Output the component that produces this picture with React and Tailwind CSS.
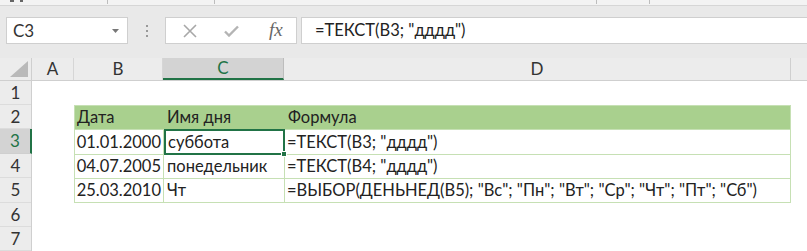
import React from 'react';

const font = { fontFamily: 'Lato, "Open Sans", sans-serif' };

const rowHeights = [24, 24, 25, 24, 25, 24, 24];

export default function App() {
  return (
    <div className="w-[807px] h-[251px] overflow-hidden bg-white text-[#222]" style={font}>
      {/* обрезанная лента сверху */}
      <div className="h-[6px] bg-[#f3f3f3] border-b border-[#d6d6d6] flex items-start">
        <span className="ml-[10px] w-[98px] border-r border-[#bdbdbd] h-[4px] flex gap-[6px]">
          <span className="w-[4px] h-[2px] bg-[#666]"></span>
          <span className="w-[3px] h-[2px] bg-[#666]"></span>
        </span>
        <span className="w-[107px] border-r border-[#bdbdbd] h-[4px]"></span>
        <span className="w-[382px] border-r border-[#bdbdbd] h-[4px]"></span>
        <span className="w-[53px] border-r border-[#bdbdbd] h-[4px]"></span>
      </div>

      {/* строка формул */}
      <div className="h-[52px] bg-[#e9e9e9] flex items-center pl-[6px] pb-[3px]">
        <div className="w-[122px] shrink-0 h-[27px] bg-white border border-[#cfcfcf] flex items-center justify-between pl-[6px] pr-[8px]">
          <span className="text-[17px] text-[#333]">C3</span>
          <svg width="7" height="4" viewBox="0 0 7 4"><path d="M0 0h7L3.5 4z" fill="#777" /></svg>
        </div>
        <div className="w-[37px] shrink-0 flex flex-col items-center gap-[3px]">
          <span className="w-[2px] h-[2px] bg-[#999]"></span>
          <span className="w-[2px] h-[2px] bg-[#999]"></span>
          <span className="w-[2px] h-[2px] bg-[#999]"></span>
        </div>
        <div className="w-[132px] shrink-0 h-[27px] bg-white border border-[#cfcfcf] flex items-center">
          <svg className="ml-[17px]" width="14" height="14" viewBox="0 0 14 14">
            <path d="M1 1L13 13M13 1L1 13" stroke="#a8a8a8" strokeWidth="1.6" />
          </svg>
          <svg className="ml-[27px]" width="15" height="12" viewBox="0 0 15 12">
            <path d="M1 6.5L5 10.5L14 1.5" stroke="#b4b4b4" strokeWidth="2.4" fill="none" />
          </svg>
          <span className="ml-[30px] text-[19px] italic text-[#666]" style={{ fontFamily: '"Liberation Serif", serif' }}>fx</span>
        </div>
        <div className="ml-[4px] flex-1 h-[27px] bg-white border border-[#cfcfcf] border-r-0 flex items-center pl-[13px]">
          <span className="text-[16.5px] text-[#222]">=ТЕКСТ(B3; "дддд")</span>
        </div>
      </div>

      {/* заголовки столбцов */}
      <div className="h-[23px] flex bg-[#ececec] border-b border-[#cfcfcf] text-[17px] text-[#333]">
        <div className="w-[32px] shrink-0 border-r border-[#cfcfcf] flex items-end justify-end p-[3px]">
          <svg width="18" height="16" viewBox="0 0 18 16"><path d="M18 0V16H0z" fill="#b9b9b9" /></svg>
        </div>
        <div className="w-[42px] shrink-0 border-r border-[#d6d6d6] flex items-center justify-center">A</div>
        <div className="w-[89px] shrink-0 border-r border-[#d6d6d6] flex items-center justify-center">B</div>
        <div className="w-[121px] shrink-0 bg-[#d3d3d3] border-r border-[#bdbdbd] border-b-2 border-b-[#217346] text-[#217346] flex items-center justify-center">C</div>
        <div className="w-[507px] shrink-0 border-r border-[#cfcfcf] flex items-center justify-center">D</div>
        <div className="flex-1"></div>
      </div>

      {/* строки */}
      <div className="flex">
        <div className="w-[32px] shrink-0 bg-[#ececec] border-r border-[#cfcfcf] flex flex-col text-[17px] text-[#333]">
          {rowHeights.map((h, i) => (
            <div
              key={i}
              style={{ height: h }}
              className={
                i === 2
                  ? 'bg-[#d3d3d3] text-[#217346] border-b border-[#cfcfcf] border-r-2 border-r-[#217346] -mr-px flex items-center justify-center'
                  : 'border-b border-[#dcdcdc] flex items-center justify-center'
              }
            >
              {i + 1}
            </div>
          ))}
        </div>

        <div className="flex-1 flex flex-col text-[16.5px]">
          <div className="h-[24px]"></div>
          <div className="ml-[42px] w-[717px] border border-[#c6e0b4]">
            <div className="h-[23px] bg-[#a9d08e] flex items-center">
              <div className="w-[89px] shrink-0 pl-[2px]">Дата</div>
              <div className="w-[121px] shrink-0 pl-[3px]">Имя дня</div>
              <div className="flex-1 pl-[3px]">Формула</div>
            </div>
            <div className="h-[25px] flex border-t border-[#c6e0b4]">
              <div className="w-[89px] shrink-0 border-r border-[#c6e0b4] flex items-center justify-end pr-[2px]">01.01.2000</div>
              <div className="relative w-[121px] shrink-0 border-2 border-[#217346] -my-px flex items-center pl-[2px]">
                суббота
                <span className="absolute -right-[4px] -bottom-[4px] w-[6px] h-[6px] bg-[#217346] border border-white"></span>
              </div>
              <div className="flex-1 flex items-center pl-[2px]">=ТЕКСТ(B3; "дддд")</div>
            </div>
            <div className="h-[24px] flex border-t border-[#c6e0b4]">
              <div className="w-[89px] shrink-0 border-r border-[#c6e0b4] flex items-center justify-end pr-[2px]">04.07.2005</div>
              <div className="w-[121px] shrink-0 border-r border-[#c6e0b4] flex items-center pl-[3px]">понедельник</div>
              <div className="flex-1 flex items-center pl-[2px]">=ТЕКСТ(B4; "дддд")</div>
            </div>
            <div className="h-[24px] flex border-t border-[#c6e0b4]">
              <div className="w-[89px] shrink-0 border-r border-[#c6e0b4] flex items-center justify-end pr-[2px]">25.03.2010</div>
              <div className="w-[121px] shrink-0 border-r border-[#c6e0b4] flex items-center pl-[3px]">Чт</div>
              <div className="flex-1 flex items-center pl-[2px] whitespace-nowrap">=ВЫБОР(ДЕНЬНЕД(B5); "Вс"; "Пн"; "Вт"; "Ср"; "Чт"; "Пт"; "Сб")</div>
            </div>
          </div>
        </div>
      </div>
    </div>
  );
}
